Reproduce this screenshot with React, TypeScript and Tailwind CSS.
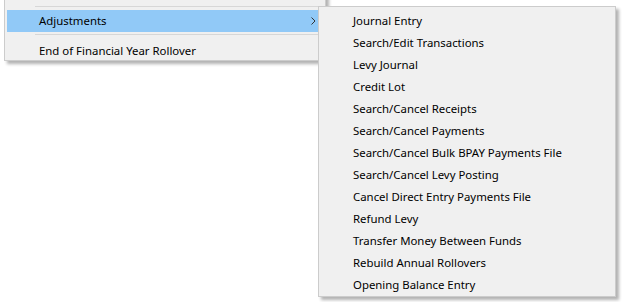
import React from "react";

const items = [
  "Journal Entry",
  "Search/Edit Transactions",
  "Levy Journal",
  "Credit Lot",
  "Search/Cancel Receipts",
  "Search/Cancel Payments",
  "Search/Cancel Bulk BPAY Payments File",
  "Search/Cancel Levy Posting",
  "Cancel Direct Entry Payments File",
  "Refund Levy",
  "Transfer Money Between Funds",
  "Rebuild Annual Rollovers",
  "Opening Balance Entry",
];

function Chevron() {
  return (
    <svg width="5" height="8" viewBox="0 0 5 8" className="block">
      <path d="M0.5 0.5 L4 4 L0.5 7.5" fill="none" stroke="#333" strokeWidth="1" />
    </svg>
  );
}

export default function App() {
  return (
    <div
      className="relative h-[302px] w-[623px] overflow-hidden bg-white text-[11.4px] text-black"
      style={{ fontFamily: '"Segoe UI", "Noto Sans", sans-serif' }}
    >
      {/* parent menu, top cut off */}
      <div className="ml-[4px] mt-[-20px] w-[322px] border border-[#cccccc] bg-[#f0f0f0] px-[2px] pt-[2px] shadow-[3px_3px_3px_rgba(0,0,0,0.3)]">
        <div className="h-[21px]" />
        <div className="flex h-[6px] items-start pt-[2px] pl-[28px]">
          <div className="h-px w-full bg-[#d7d7d7]" />
        </div>
        <div className="flex h-[22px] items-center bg-[#91c9f7] pl-[32px] pr-[7px]">
          <span className="flex-1">Adjustments</span>
          <Chevron />
        </div>
        <div className="flex h-[5px] items-start pt-[2px] pl-[28px]">
          <div className="h-px w-full bg-[#d7d7d7]" />
        </div>
        <div className="flex h-[23px] items-center pt-[5px] pl-[32px]">
          End of Financial Year Rollover
        </div>
      </div>

      {/* submenu */}
      <div className="absolute left-[318px] top-[6px] w-[298px] border border-[#cccccc] bg-[#f0f0f0] px-[2px] pt-[3px] shadow-[3px_3px_3px_rgba(0,0,0,0.3)]">
        {items.map((label) => (
          <div key={label} className="flex h-[22px] items-center pl-[32px]">
            {label}
          </div>
        ))}
      </div>
    </div>
  );
}
